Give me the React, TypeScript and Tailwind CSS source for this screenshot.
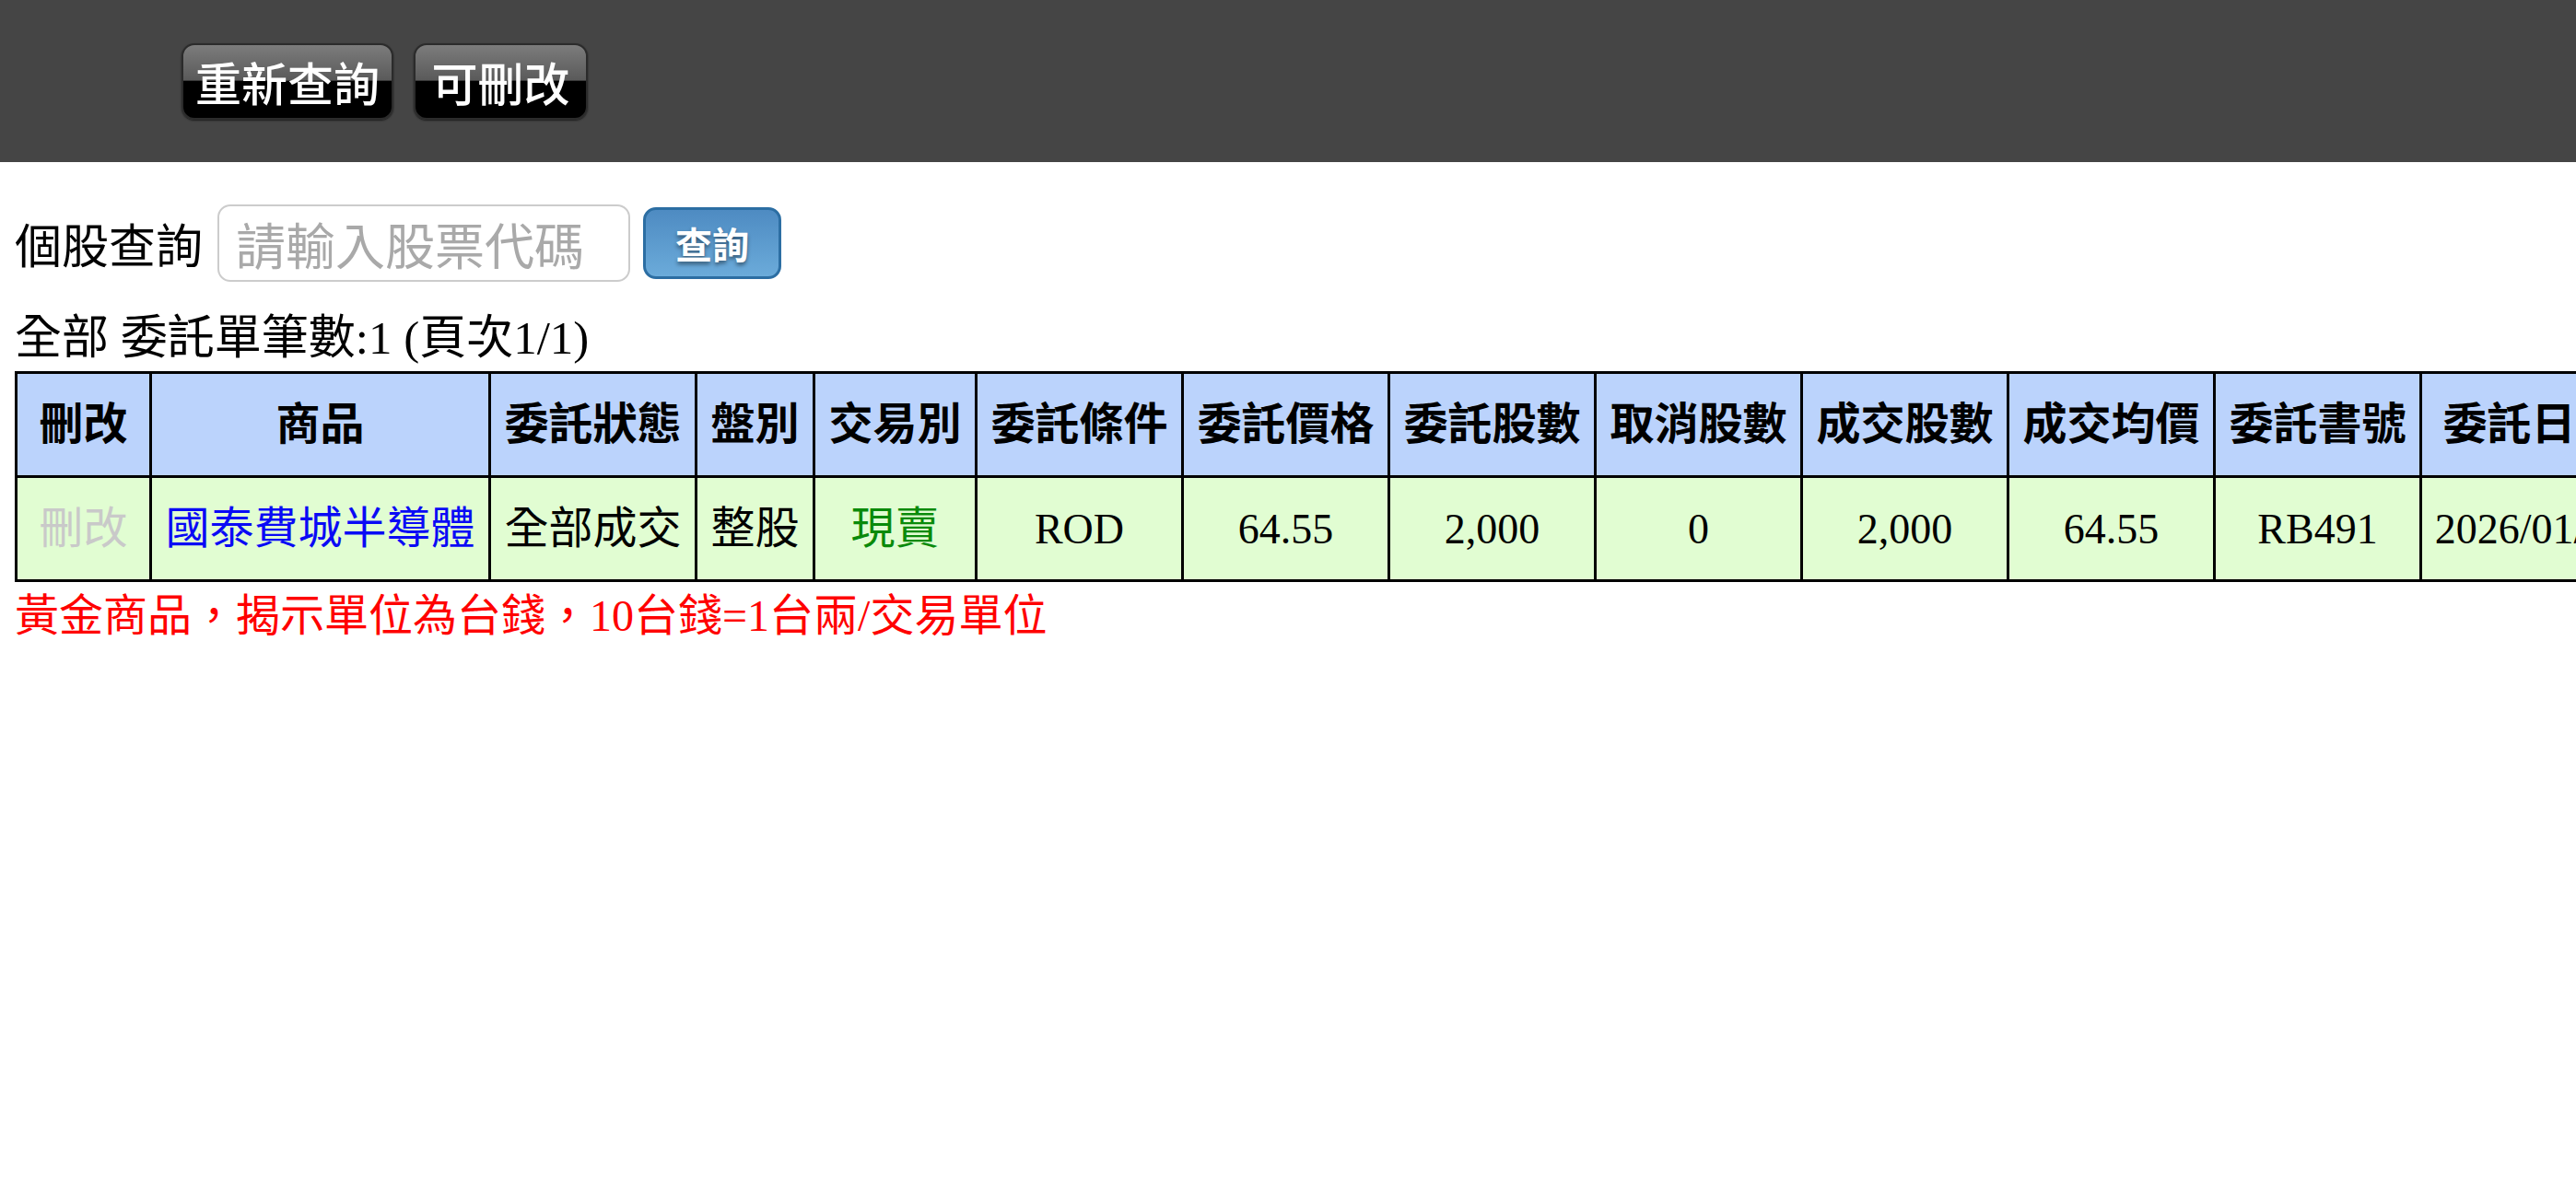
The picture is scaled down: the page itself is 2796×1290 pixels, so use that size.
import React from "react";

const headers = [
  "刪改",
  "商品",
  "委託狀態",
  "盤別",
  "交易別",
  "委託條件",
  "委託價格",
  "委託股數",
  "取消股數",
  "成交股數",
  "成交均價",
  "委託書號",
  "委託日期",
];

const colWidths = [
  "w-[146px]",
  "w-[368px]",
  "w-[224px]",
  "w-[128px]",
  "w-[176px]",
  "w-[224px]",
  "w-[224px]",
  "w-[224px]",
  "w-[224px]",
  "w-[224px]",
  "w-[224px]",
  "w-[224px]",
  "w-[240px]",
];

function GlossButton({ label, width }: { label: string; width: string }) {
  return (
    <button
      className={`${width} h-[83px] rounded-[14px] border-2 border-[#2b2b2b] bg-[linear-gradient(to_bottom,#7c7c7c_0%,#5a5a5a_48%,#000000_50%,#000000_100%)] text-white text-[50px] font-medium leading-none shadow-[0_1px_2px_rgba(0,0,0,0.6)] flex items-center justify-center`}
      style={{ fontFamily: '"Noto Sans CJK TC", "Noto Sans", sans-serif' }}
    >
      {label}
    </button>
  );
}

export default function App() {
  const cell =
    "border-[3px] border-black bg-[#e1fdd2] text-center align-middle whitespace-nowrap text-[46px] font-normal";
  const cjk = "text-[48px]";
  return (
    <div
      className="w-[2796px] h-[1290px] overflow-hidden bg-white text-black"
      style={{ fontFamily: '"Noto Sans CJK TC", "Noto Sans", sans-serif' }}
    >
      <div className="h-[176px] bg-[#454545] flex items-center pl-[197px] gap-[22px]">
        <GlossButton label="重新查詢" width="w-[230px]" />
        <GlossButton label="可刪改" width="w-[189px]" />
      </div>

      <div className="px-[16px]">
        <div className="mt-[46px] flex items-center h-[84px]">
          <span className="text-[51px] leading-none">個股查詢</span>
          <input
            className="ml-[16px] w-[448px] h-[84px] rounded-[14px] border-2 border-[#cccccc] px-[18px] text-[54px] text-[#555] placeholder:text-[#a9a9a9] outline-none"
            placeholder="請輸入股票代碼"
            style={{ fontFamily: '"Noto Sans CJK TC", sans-serif' }}
          />
          <button className="ml-[14px] w-[150px] h-[78px] rounded-[14px] border-[3px] border-[#2c6ea3] bg-[linear-gradient(to_bottom,#4e8bc2,#6babda)] text-white text-[40px] font-bold leading-none [text-shadow:0_3px_4px_rgba(0,0,0,0.45)] flex items-center justify-center">
            查詢
          </button>
        </div>

        <div
          className="mt-[31px] text-[51px] leading-[60px] whitespace-nowrap"
          style={{ fontFamily: '"Liberation Serif", "Noto Sans CJK TC", serif' }}
        >
          全部 委託單筆數:1 (頁次1/1)
        </div>

        <table
          className="mt-[6px] border-collapse table-fixed w-[2850px]"
          style={{ fontFamily: '"Liberation Serif", "Noto Sans CJK TC", serif' }}
        >
          <colgroup>
            {colWidths.map((w, i) => (
              <col key={i} className={w} />
            ))}
          </colgroup>
          <thead>
            <tr className="h-[113px]">
              {headers.map((h) => (
                <th
                  key={h}
                  className="border-[3px] border-black bg-[#bbd3fc] text-center align-middle whitespace-nowrap text-[48px] font-bold"
                >
                  {h}
                </th>
              ))}
            </tr>
          </thead>
          <tbody>
            <tr className="h-[113px]">
              <td className={`${cell} ${cjk} text-[#c9c9c9]`}>刪改</td>
              <td className={`${cell} ${cjk} text-[#0a0af5]`}>國泰費城半導體</td>
              <td className={`${cell} ${cjk}`}>全部成交</td>
              <td className={`${cell} ${cjk}`}>整股</td>
              <td className={`${cell} ${cjk} text-[#0a8a0a]`}>現賣</td>
              <td className={cell}>ROD</td>
              <td className={cell}>64.55</td>
              <td className={cell}>2,000</td>
              <td className={cell}>0</td>
              <td className={cell}>2,000</td>
              <td className={cell}>64.55</td>
              <td className={cell}>RB491</td>
              <td className={cell}>2026/01/16</td>
            </tr>
          </tbody>
        </table>

        <div
          className="mt-[8px] text-[48px] leading-[58px] text-[#ff0000] whitespace-nowrap"
          style={{ fontFamily: '"Liberation Serif", "Noto Sans CJK TC", serif' }}
        >
          黃金商品，揭示單位為台錢，10台錢=1台兩/交易單位
        </div>
      </div>
    </div>
  );
}
